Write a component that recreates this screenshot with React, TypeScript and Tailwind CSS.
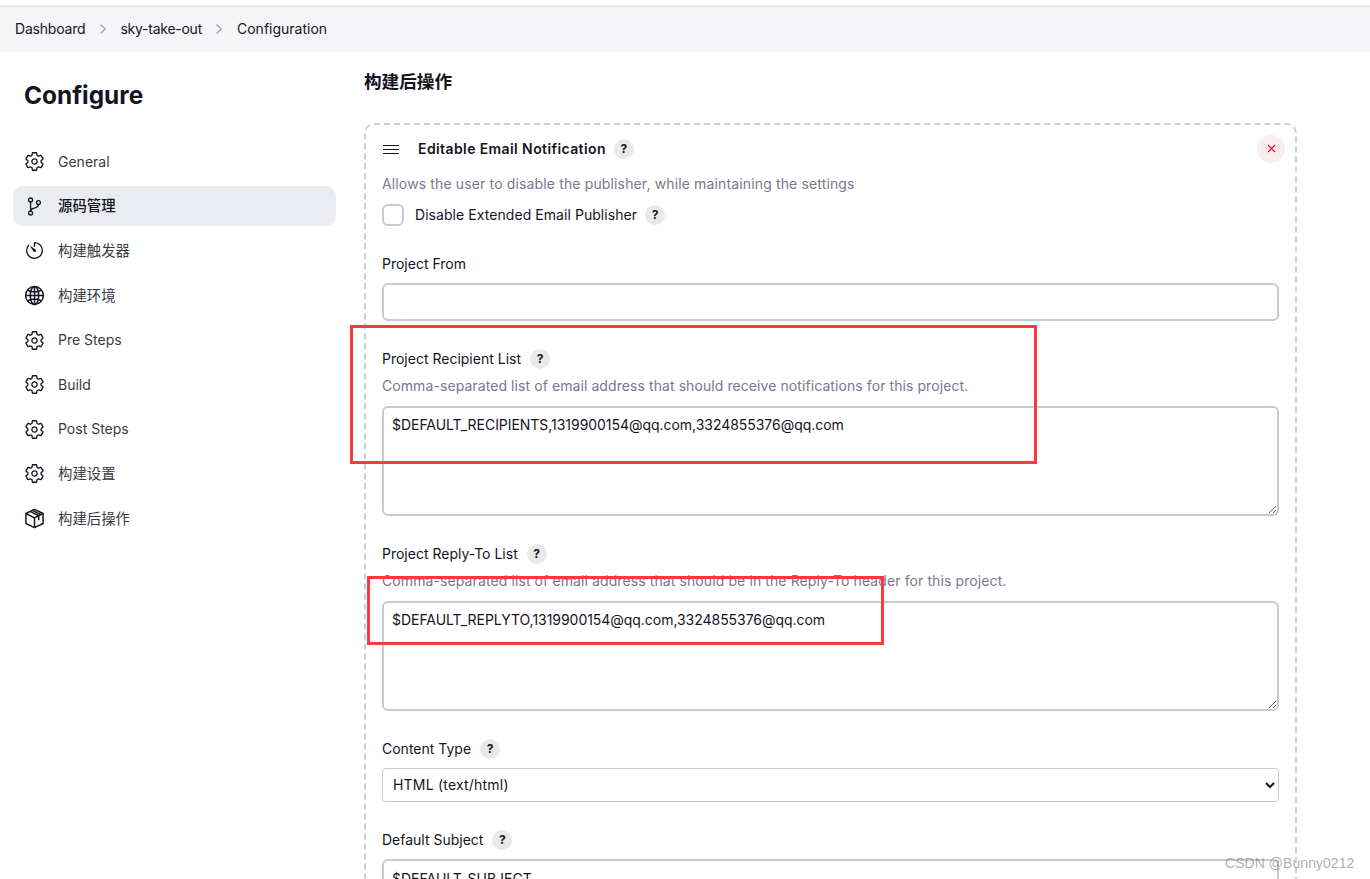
import { ReactNode } from "react";
import { IoSettingsOutline, IoGitBranchOutline, IoTimerOutline } from "react-icons/io5";

const font = "font-['Inter','Noto_Sans_CJK_SC',sans-serif]";

function GlobeIcon() {
  return (
    <svg width="21" height="21" viewBox="0 0 24 24" fill="none" stroke="currentColor" strokeWidth="1.7">
      <circle cx="12" cy="12" r="10.2" />
      <ellipse cx="12" cy="12" rx="4.8" ry="10.2" />
      <path d="M12 1.8v20.4M1.8 12h20.4M4 5.8c4.5 2.8 11.500 2.800 16 0M4 18.200c4.500-2.800 11.500-2.800 16 0" />
    </svg>
  );
}

function PackageIcon() {
  return (
    <svg width="21" height="21" viewBox="0 0 24 24" fill="none" stroke="currentColor" strokeWidth="1.7" strokeLinejoin="round">
      <path d="M12 1.500l9.800 4.800v11.400L12 22.500l-9.800-4.800V6.300z" />
      <path d="M2.200 6.300L12 11.200l9.800-4.900M12 11.200v11.300" />
      <path d="M7 3.900l9.800 5v5.100M9.600 2.700l9.800 4.900" />
    </svg>
  );
}

const navItems = [
  { label: "General", icon: <IoSettingsOutline /> },
  { label: "源码管理", icon: <IoGitBranchOutline />, active: true, cjk: true },
  { label: "构建触发器", icon: <IoTimerOutline />, cjk: true },
  { label: "构建环境", icon: <GlobeIcon />, cjk: true },
  { label: "Pre Steps", icon: <IoSettingsOutline /> },
  { label: "Build", icon: <IoSettingsOutline /> },
  { label: "Post Steps", icon: <IoSettingsOutline /> },
  { label: "构建设置", icon: <IoSettingsOutline />, cjk: true },
  { label: "构建后操作", icon: <PackageIcon />, cjk: true },
];

function Help() {
  return (
    <span className="flex h-5 w-5 shrink-0 items-center justify-center rounded-full bg-[#e9e9ea] text-xs font-bold text-[#14141f]">
      ?
    </span>
  );
}

function Label({ children, help = true }: { children: ReactNode; help?: boolean }) {
  return (
    <div className="flex h-5 items-center gap-[9px] text-sm leading-5 text-[#14141f]">
      <span>{children}</span>
      {help && <Help />}
    </div>
  );
}

function Chevron() {
  return (
    <svg width="6" height="10" viewBox="0 0 6 10" fill="none" stroke="#a3a3ad" strokeWidth="1.4" className="mx-[14.5px] shrink-0">
      <path d="M0.500 0.500L5.300 5L0.500 9.500" />
    </svg>
  );
}

export default function App() {
  return (
    <div className={`relative h-[879px] overflow-hidden bg-white ${font}`}>
      <div className="h-[5px] bg-white" />
      {/* Breadcrumb bar */}
      <div className="flex h-[47px] items-center border-t-2 border-[#e9e9ec] bg-[#f5f5f7] pb-[2px] pl-[15px] text-sm text-[#14141f]">
        <span className="tracking-[-0.2px]">Dashboard</span>
        <Chevron />
        <span className="tracking-[-0.25px]">sky-take-out</span>
        <Chevron />
        <span>Configuration</span>
      </div>

      <div className="flex">
        {/* Sidebar */}
        <aside className="ml-[13px] w-[323px] shrink-0">
          <h1 className="mt-[26px] pl-[11px] text-[24.4px] font-bold leading-[34px] text-[#14141f]">Configure</h1>
          <nav className="mt-[29.5px] flex flex-col gap-[4.65px]">
            {navItems.map((item) => (
              <div
                key={item.label}
                className={`flex h-10 items-center gap-[13px] rounded-[10px] pl-[11px] ${item.cjk ? "text-[14.4px]" : "text-sm"} ${
                  item.active ? "bg-[#ebecf1] font-medium text-[#14141f]" : "text-[#3a3a44]"
                }`}
              >
                <span className="flex h-[21px] w-[21px] items-center justify-center text-[21px] text-[#14141f]">{item.icon}</span>
                {item.label}
              </div>
            ))}
          </nav>
        </aside>

        {/* Main */}
        <main className="ml-[28px] w-[933px] shrink-0">
          <h2 className="mt-[18px] text-[17.6px] font-semibold leading-[24px] text-[#14141f]">构建后操作</h2>
          <section className="mt-[29px] h-[800px] rounded-[10px] border-2 border-dashed border-[#c8ced4] pl-4 pr-4">
            <div className="flex h-[48px] items-center">
              <svg width="16" height="9" viewBox="0 0 16 9" className="ml-[1px] shrink-0" stroke="#14141f" strokeWidth="1">
                <path d="M0 .5h16M0 4.500h16M0 8.500h16" />
              </svg>
              <span className="ml-[19px] text-sm font-semibold tracking-[0.4px] text-[#14141f]">Editable Email Notification</span>
              <span className="ml-2">
                <Help />
              </span>
              <button className="-mt-[1px] ml-auto mr-[-6px] flex h-7 w-7 items-center justify-center rounded-full bg-[#f9eeee] text-[#e6001f]">
                <svg width="9" height="9" viewBox="0 0 9 9" stroke="currentColor" strokeWidth="1.1" fill="none">
                  <path d="M1 1l7 7M8 1l-7 7" />
                </svg>
              </button>
            </div>
            <p className="mt-[1px] text-sm leading-5 tracking-[0.14px] text-[#787891]">Allows the user to disable the publisher, while maintaining the settings</p>
            <div className="mt-[10px] flex h-[22px] items-center gap-[11px] text-sm text-[#14141f]">
              <span className="h-[22px] w-[22px] rounded-[6px] border-2 border-[#c3ccd1] bg-white" />
              <span className="tracking-[0.06px]">Disable Extended Email Publisher</span>
              <span className="-ml-[3px]">
                <Help />
              </span>
            </div>

            <div className="mt-[28px]">
              <Label help={false}>Project From</Label>
              <input className="mt-[9px] block h-[38px] w-[897px] rounded-[6px] border-2 border-[#c3ccd1] bg-white" />
            </div>

            <div className="mt-[28px]">
              <Label>Project Recipient List</Label>
              <p className="mt-[7px] text-sm leading-5 tracking-[0.08px] text-[#787891]">Comma-separated list of email address that should receive notifications for this project.</p>
              <textarea
                className="mt-[10px] block h-[110px] w-[897px] rounded-[6px] border-2 border-[#c3ccd1] bg-white px-[8px] py-[7px] text-sm leading-5 tracking-[-0.04px] text-[#14141f] outline-none"
                defaultValue="$DEFAULT_RECIPIENTS,1319900154@qq.com,3324855376@qq.com"
              />
            </div>

            <div className="mt-[28px]">
              <Label>Project Reply-To List</Label>
              <p className="mt-[7px] text-sm leading-5 tracking-[0.1px] text-[#787891]">Comma-separated list of email address that should be in the Reply-To header for this project.</p>
              <textarea
                className="mt-[10px] block h-[110px] w-[897px] rounded-[6px] border-2 border-[#c3ccd1] bg-white px-[8px] py-[7px] text-sm leading-5 tracking-[-0.04px] text-[#14141f] outline-none"
                defaultValue="$DEFAULT_REPLYTO,1319900154@qq.com,3324855376@qq.com"
              />
            </div>

            <div className="mt-[28px]">
              <Label>Content Type</Label>
              <select
                className="mt-[9px] block h-[34px] w-[897px] appearance-auto rounded-[4px] border border-[#c3ccd1] bg-white pb-[1px] pl-[6px] text-sm tracking-[0.2px] text-[#14141f] outline-none"
                defaultValue="html"
              >
                <option value="html">HTML (text/html)</option>
              </select>
            </div>

            <div className="mt-[28px]">
              <Label>Default Subject</Label>
              <input
                className="mt-[9px] block h-[38px] w-[897px] rounded-[6px] border-2 border-[#c3ccd1] bg-white px-[8px] text-sm text-[#14141f] outline-none"
                defaultValue="$DEFAULT_SUBJECT"
              />
            </div>
          </section>
        </main>
      </div>

      {/* Annotations drawn over the screenshot */}
      <div className="absolute left-[350px] top-[325px] h-[139px] w-[687px] border-[3px] border-[#fb3a3a]" />
      <div className="absolute left-[367px] top-[576px] h-[69px] w-[517px] border-[3px] border-[#fb3a3a]" />
      <div className="absolute left-[1225px] top-[853px] font-['Liberation_Sans',sans-serif] text-sm tracking-[0.05px] text-[#77777799]">CSDN @Bunny0212</div>
    </div>
  );
}
